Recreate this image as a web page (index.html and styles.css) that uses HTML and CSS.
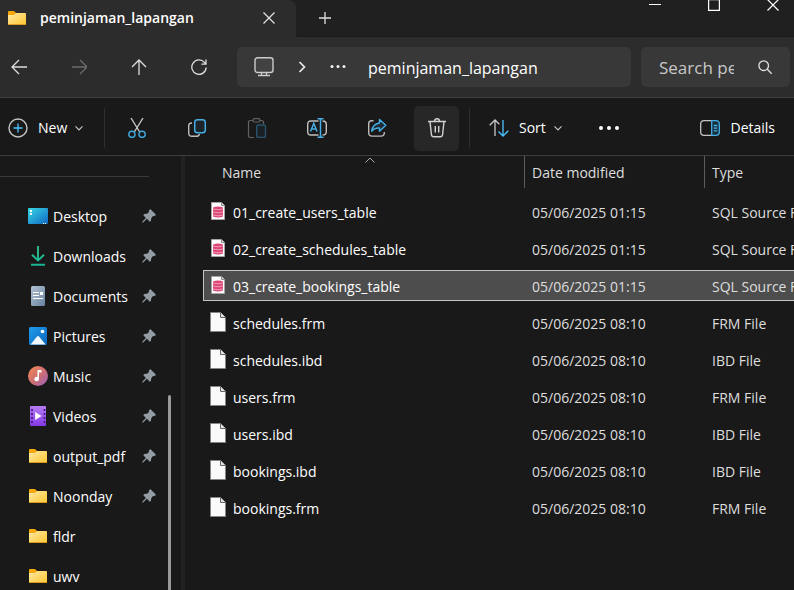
FILE: index.html
```html
<!DOCTYPE html>
<html lang="en">
<head>
<meta charset="utf-8">
<meta name="viewport" content="width=device-width, initial-scale=1">
<title>peminjaman_lapangan</title>
<link rel="stylesheet" href="styles.css">
</head>
<body>
<svg class="defs" aria-hidden="true">
  <defs>
    <linearGradient id="g-folder" x1="0" y1="0" x2="1" y2="1"><stop offset="0" stop-color="#ffe9a8"/><stop offset="1" stop-color="#ffc52e"/></linearGradient>
    <linearGradient id="g-desktop" x1="0" y1="0" x2="1" y2="1"><stop offset="0" stop-color="#37d8e4"/><stop offset="1" stop-color="#1268c4"/></linearGradient>
    <linearGradient id="g-down" gradientUnits="userSpaceOnUse" x1="0" y1="0" x2="0" y2="20"><stop offset="0" stop-color="#2fc28a"/><stop offset="1" stop-color="#16b595"/></linearGradient>
    <linearGradient id="g-doc" x1="0" y1="0" x2="1" y2="1"><stop offset="0" stop-color="#b4c3d6"/><stop offset="1" stop-color="#66829f"/></linearGradient>
    <linearGradient id="g-pic" x1="0" y1="0" x2="1" y2="1"><stop offset="0" stop-color="#219cec"/><stop offset="1" stop-color="#0b66bd"/></linearGradient>
    <linearGradient id="g-music" x1="0" y1="0" x2="1" y2="1"><stop offset="0" stop-color="#f38b50"/><stop offset=".55" stop-color="#cb6d75"/><stop offset="1" stop-color="#9a62bd"/></linearGradient>
    <linearGradient id="g-video" x1="0" y1="0" x2="0" y2="1"><stop offset="0" stop-color="#b57cf4"/><stop offset="1" stop-color="#8439e4"/></linearGradient>
    <symbol id="folder" viewBox="0 0 20 20">
      <path d="M1 4q0-1 1-1h5l2 2v3H1z" fill="#f7a70b"/>
      <path d="M1 7h6l2-2h9.200q.8 0 .8.800V17H1z" fill="url(#g-folder)"/>
      <path d="M1 16.500h18" stroke="#d99b20"/>
    </symbol>
    <symbol id="pin" viewBox="0 0 14 14">
      <path d="M8.500.200 13.800 5.500 13.200 6.800 10.800 7.300 9.200 9.300 9 11.800 7.800 12.700 4.900 9.800 1.200 13.400.300 13.500.300 12.700 3.900 8.900 1.300 6.300 2.200 5 5 4.800 6.700 3.200 7.200.900z" fill="#939da3"/>
    </symbol>
    <symbol id="page" viewBox="0 0 16 20">
      <path d="M.500.500h10l5 5v14H.500z" fill="#fafafa" stroke="#858585"/>
      <path d="M10.500.500v5h5" fill="#e4e4e4" stroke="#666"/>
    </symbol>
    <symbol id="sql" viewBox="0 0 16 20">
      <path d="M1.500 1.500h10l3 3v14h-13z" fill="#fcfcfc" stroke="#a5a5a5"/>
      <path d="M11.500 1.500v3h3" fill="#ddd" stroke="#888"/>
      <path d="M3 6.500q5-2 10 0v9q-5 2-10 0z" fill="#dc4675"/>
      <path d="M3 8q5 1.600 10 0M3 11q5 1.600 10 0M3 14q5 1.600 10 0" fill="none" stroke="#f4afc4" stroke-width=".8"/>
    </symbol>
    <symbol id="chev" viewBox="0 0 8 8"><path d="m.500 2.300 3.500 3.500 3.500-3.500" fill="none" stroke="#c8c8c8" stroke-width="1.200"/></symbol>
  </defs>
</svg>

<header class="titlebar">
  <div class="tab">
    <svg class="i20" aria-hidden="true"><use href="#folder"/></svg>
    <span class="tab-title">peminjaman_lapangan</span>
    <button class="plain" aria-label="Close tab"><svg class="i12" viewBox="0 0 12 12"><path d="m.500.500 11 11M11.500.500l-11 11" fill="none" stroke="#e4e4e4" stroke-width="1.200"/></svg></button>
  </div>
  <button class="plain new-tab" aria-label="New tab"><svg class="i12" viewBox="0 0 12 12"><path d="M0 6h12M6 0v12" fill="none" stroke="#dedede" stroke-width="1.300"/></svg></button>
  <div class="window-controls">
    <button class="plain" aria-label="Minimize"><svg class="i12" viewBox="0 0 12 12"><path d="M0 5.500h12" stroke="#fff"/></svg></button>
    <button class="plain" aria-label="Maximize"><svg class="i12" viewBox="0 0 12 12"><path d="M.600 .600h10.800v10.800H.600z" fill="none" stroke="#fff" stroke-width="1.200"/></svg></button>
    <button class="plain" aria-label="Close"><svg class="i12" viewBox="0 0 12 12"><path d="m.500.500 11 11M11.500.500l-11 11" stroke="#fff" stroke-width="1.200"/></svg></button>
  </div>
</header>

<nav class="navbar" aria-label="Navigation">
  <div class="nav-buttons">
    <button class="plain" aria-label="Back"><svg class="i16" viewBox="0 0 16 16"><path d="M16 8H1M8 1 1 8l7 7" fill="none" stroke="#ddd" stroke-width="1.300"/></svg></button>
    <button class="plain" aria-label="Forward" disabled><svg class="i16" viewBox="0 0 16 16"><path d="M1 8h15M9 1l7 7-7 7" fill="none" stroke="#6c6c6c" stroke-width="1.300"/></svg></button>
    <button class="plain" aria-label="Up"><svg class="i16" viewBox="0 0 16 16"><path d="M8 16V1M1 8l7-7 7 7" fill="none" stroke="#ddd" stroke-width="1.300"/></svg></button>
    <button class="plain" aria-label="Refresh"><svg class="i16" viewBox="0 0 16 16"><path d="M15.200 8.500A7.200 7.200 0 1 1 13.600 3.600L14.600 4.900M15 .500v4.700h-4.600" fill="none" stroke="#ddd" stroke-width="1.300"/></svg></button>
  </div>
  <div class="address">
    <button class="plain pc" aria-label="This PC"><svg class="i20" viewBox="0 0 20 20"><rect x="1" y=".700" width="18" height="14.800" rx="2.500" fill="#424242" stroke="#ccc" stroke-width="1.400"/><path d="M7.500 16v2.300M12.500 16v2.300M4 18.500h12" stroke="#ccc" stroke-width="1.300"/></svg></button>
    <button class="plain sep" aria-label="Expand"><svg class="i12" viewBox="0 0 12 12"><path d="m3.500 1 5 5-5 5" fill="none" stroke="#f0f0f0" stroke-width="1.600"/></svg></button>
    <button class="plain" aria-label="More folders"><svg class="i16" viewBox="0 0 16 16"><g fill="#f4f4f4"><circle cx="2" cy="7.500" r="1.500"/><circle cx="8" cy="7.500" r="1.500"/><circle cx="14" cy="7.500" r="1.500"/></g></svg></button>
    <a class="crumb" href="#files">peminjaman_lapangan</a>
  </div>
  <div class="search">
    <input type="text" aria-label="Search peminjaman_lapangan" placeholder="Search peminjaman_lapangan">
    <svg class="i16" viewBox="0 0 16 16" aria-hidden="true"><circle cx="6.700" cy="6.700" r="4.800" fill="none" stroke="#e2e2e2" stroke-width="1.300"/><path d="m10.300 10.300 4.400 4.400" stroke="#e2e2e2" stroke-width="1.300"/></svg>
  </div>
</nav>

<div class="toolbar" role="toolbar" aria-label="Commands">
  <button class="plain command new"><svg class="i20" viewBox="0 0 20 20"><circle cx="10" cy="10" r="9" fill="none" stroke="#c4c4c4" stroke-width="1.400"/><path d="M5.500 10h9M10 5.500v9" stroke="#4cc2ff" stroke-width="1.300"/></svg><span>New</span><svg class="i8"><use href="#chev"/></svg></button>
  <div class="tools">
    <button class="plain" aria-label="Cut"><svg class="i20" viewBox="0 0 20 20"><path d="M4 0l8.700 14M16 0 7.300 14" fill="none" stroke="#ccc" stroke-width="1.300"/><g fill="none" stroke="#3ea6dc" stroke-width="1.400"><circle cx="4.900" cy="16.300" r="3.100"/><circle cx="15.100" cy="16.300" r="3.100"/></g></svg></button>
    <button class="plain" aria-label="Copy"><svg class="i20" viewBox="0 0 20 20"><path d="M5 5H4.500Q1.700 5 1.700 7.800V15q0 3.300 3.300 3.300h4.700q2.200 0 2.800-2.300" fill="none" stroke="#bbb" stroke-width="1.400"/><rect x="7.700" y="1.700" width="10.600" height="13" rx="2.800" fill="#1d2429" stroke="#45aee4" stroke-width="1.500"/></svg></button>
    <button class="plain" aria-label="Paste" disabled><svg class="i20" viewBox="0 0 20 20"><path d="M6 2.500H3.500Q1.500 2.500 1.500 4.500v13q0 2 2 2H7M12.500 2.500h2q2 0 2 2V6" fill="none" stroke="#626262" stroke-width="1.200"/><rect x="6" y=".700" width="7" height="3.300" rx="1.500" fill="none" stroke="#626262" stroke-width="1.200"/><rect x="9.700" y="7" width="8.800" height="12.400" rx="1.500" fill="#1b2025" stroke="#28536b" stroke-width="1.400"/></svg></button>
    <button class="plain" aria-label="Rename"><svg class="i20" viewBox="0 0 20 20"><path d="M11.500 3H4Q.700 3 .700 6.300v7.400Q.700 17 4 17h7.500M15.500 3q3.800 0 3.800 3.300v7.400q0 3.300-3.800 3.300" fill="none" stroke="#c0c0c0" stroke-width="1.400"/><path d="m3.500 13.500 3.300-8 3.300 8M4.700 11h4.200M10.500.700h6M13.500.700v18.600M10.500 19.300h6" fill="none" stroke="#45aee4" stroke-width="1.500"/></svg></button>
    <button class="plain" aria-label="Share"><svg class="i20" viewBox="0 0 20 20"><path d="M6.500 2.800H4.700Q1.700 2.800 1.700 5.800v9q0 3.300 3.300 3.300h9q3.300 0 3.300-3.300V14" fill="none" stroke="#bbb" stroke-width="1.400"/><path d="m12.500 1.500 6.300 5.800-6.300 5.900V10Q7.500 9.600 4.700 13.300 5.300 6.200 12.500 5z" fill="#1d2a32" stroke="#45aee4" stroke-width="1.400" stroke-linejoin="round"/></svg></button>
    <button class="plain hot" aria-label="Delete"><svg class="i20" viewBox="0 0 20 20"><path d="M1 3.500h18M3 3.500l1.400 13q.2 2.300 2.500 2.300h6.200q2.300 0 2.500-2.300L17 3.500M7.500 3.500q0-2.700 2.500-2.700t2.500 2.700M8.300 8v6.500M11.700 8v6.500" fill="none" stroke="#d2d2d2" stroke-width="1.400"/></svg></button>
  </div>
  <button class="plain command sort"><svg class="i20" viewBox="0 0 20 20"><path d="M6 18V2M.700 7.300 6 2l4.300 4.300" fill="none" stroke="#c8c8c8" stroke-width="1.300"/><path d="M14 2v16M9.500 13.500 14 18l5.300-5.300" fill="none" stroke="#4cc2ff" stroke-width="1.300"/></svg><span>Sort</span><svg class="i8"><use href="#chev"/></svg></button>
  <button class="plain more" aria-label="See more"><svg class="i20" viewBox="0 0 20 20"><g fill="#fff"><circle cx="2" cy="10" r="2"/><circle cx="10" cy="10" r="2"/><circle cx="18" cy="10" r="2"/></g></svg></button>
  <button class="plain command details"><svg class="i20" viewBox="0 0 20 20"><path d="M12 2.700H4Q.700 2.700.700 6v8Q.700 17.300 4 17.300h8" fill="none" stroke="#c4c4c4" stroke-width="1.300"/><path d="M11.700 2.700H16q3.300 0 3.300 3.300v8q0 3.300-3.300 3.300h-4.300zM13.800 7.500h3.500M13.800 10.200h3.500M13.800 12.900h3.500" fill="#17303f" stroke="#45aee4" stroke-width="1.300"/></svg><span>Details</span></button>
</div>

<div class="body">
  <aside class="sidebar">
    <hr>
    <ul>
      <li><a href="#desktop"><svg class="i20" viewBox="0 0 20 20"><rect y="2" width="20" height="16" rx="1" fill="url(#g-desktop)"/><path d="M2 4h2v2H2zM2 7h2v2H2zM15 17h1v1h-1zM17 17h1v1h-1z" fill="#fff"/></svg><span>Desktop</span><svg class="i14"><use href="#pin"/></svg></a></li>
      <li><a href="#downloads"><svg class="i20" viewBox="0 0 20 20"><path d="M10 0v14M4 8.800l6 5.700 6-5.700M3 18.800h14" fill="none" stroke="url(#g-down)" stroke-width="1.900"/></svg><span>Downloads</span><svg class="i14"><use href="#pin"/></svg></a></li>
      <li><a href="#documents"><svg class="i20" viewBox="0 0 20 20"><rect x="3" width="14" height="20" rx="1.500" fill="url(#g-doc)"/><path d="M5 6.500h6M5 9.500h6M5 12.500h10" stroke="#fff" stroke-width="1.200"/><path d="M12 6h3v3h-3z" fill="#fff"/></svg><span>Documents</span><svg class="i14"><use href="#pin"/></svg></a></li>
      <li><a href="#pictures"><svg class="i20" viewBox="0 0 20 20"><rect x="1" y="1" width="18" height="18" rx="1.500" fill="url(#g-pic)"/><path d="m2.500 18.500 6.500-8q1-1 2 0l6.500 8z" fill="#f3f8ff"/><circle cx="14.500" cy="5.500" r="1.800" fill="#fff"/></svg><span>Pictures</span><svg class="i14"><use href="#pin"/></svg></a></li>
      <li><a href="#music"><svg class="i20" viewBox="0 0 20 20"><circle cx="10" cy="10" r="10" fill="url(#g-music)"/><path d="M9.500 4h4v2.500H11V13a2.300 2.300 0 1 1-1.500-2.100z" fill="#fff"/></svg><span>Music</span><svg class="i14"><use href="#pin"/></svg></a></li>
      <li><a href="#videos"><svg class="i20" viewBox="0 0 20 20"><rect x="2" width="16" height="20" rx="1" fill="url(#g-video)"/><path d="M4 3v15M16.500 3v15" stroke="#44187e" stroke-width="1.700" stroke-dasharray="2 2"/><path d="m7.200 6 6.300 4-6.300 4z" fill="#fff"/></svg><span>Videos</span><svg class="i14"><use href="#pin"/></svg></a></li>
      <li><a href="#output_pdf"><svg class="i20"><use href="#folder"/></svg><span>output_pdf</span><svg class="i14"><use href="#pin"/></svg></a></li>
      <li><a href="#noonday"><svg class="i20"><use href="#folder"/></svg><span>Noonday</span><svg class="i14"><use href="#pin"/></svg></a></li>
      <li><a href="#fldr"><svg class="i20"><use href="#folder"/></svg><span>fldr</span></a></li>
      <li><a href="#uwv"><svg class="i20"><use href="#folder"/></svg><span>uwv</span></a></li>
    </ul>
    <div class="thumb"></div>
  </aside>
  <main class="files" id="files">
    <table>
      <thead>
        <tr><th class="name">Name<svg class="caret" viewBox="0 0 10 6" aria-hidden="true"><path d="M.500 5.500 5 1l4.500 4.500" fill="none" stroke="#aaa"/></svg></th><th>Date modified</th><th>Type</th></tr>
      </thead>
      <tbody>
        <tr><td><svg class="file"><use href="#sql"/></svg>01_create_users_table</td><td>05/06/2025 01:15</td><td>SQL Source File</td></tr>
        <tr><td><svg class="file"><use href="#sql"/></svg>02_create_schedules_table</td><td>05/06/2025 01:15</td><td>SQL Source File</td></tr>
        <tr class="selected"><td><svg class="file"><use href="#sql"/></svg>03_create_bookings_table</td><td>05/06/2025 01:15</td><td>SQL Source File</td></tr>
        <tr><td><svg class="file"><use href="#page"/></svg>schedules.frm</td><td>05/06/2025 08:10</td><td>FRM File</td></tr>
        <tr><td><svg class="file"><use href="#page"/></svg>schedules.ibd</td><td>05/06/2025 08:10</td><td>IBD File</td></tr>
        <tr><td><svg class="file"><use href="#page"/></svg>users.frm</td><td>05/06/2025 08:10</td><td>FRM File</td></tr>
        <tr><td><svg class="file"><use href="#page"/></svg>users.ibd</td><td>05/06/2025 08:10</td><td>IBD File</td></tr>
        <tr><td><svg class="file"><use href="#page"/></svg>bookings.ibd</td><td>05/06/2025 08:10</td><td>IBD File</td></tr>
        <tr><td><svg class="file"><use href="#page"/></svg>bookings.frm</td><td>05/06/2025 08:10</td><td>FRM File</td></tr>
      </tbody>
    </table>
  </main>
</div>
</body>
</html>
```
FILE: styles.css
```css
* { box-sizing: border-box; }

body {
  margin: 0;
  height: 100vh;
  display: flex;
  flex-direction: column;
  overflow: hidden;
  background: #191919;
  color: #fff;
  font: 14px/20px "Segoe UI", "Open Sans", "Noto Sans", sans-serif;
}

svg { display: block; flex: none; }
.defs { position: absolute; width: 0; height: 0; }
.i8 { width: 8px; height: 8px; }
.i12 { width: 12px; height: 12px; }
.i14 { width: 14px; height: 14px; }
.i16 { width: 16px; height: 16px; }
.i20 { width: 20px; height: 20px; }

.plain {
  display: flex;
  align-items: center;
  justify-content: center;
  padding: 0;
  border: 0;
  background: none;
  color: inherit;
  font: inherit;
}

/* Title bar */
.titlebar {
  display: flex;
  flex: none;
  height: 37px;
  background: #202020;
}
.tab {
  display: flex;
  align-items: center;
  width: 296px;
  padding: 0 21px 2px 7px;
  background: #2c2c2c;
  border-radius: 0 8px 0 0;
}
.tab-title { flex: 1; margin-left: 13px; font-weight: 600; }
.new-tab { width: 58px; border-bottom: 1px solid #1b1b1b; border-radius: 0 0 0 4px; }
.window-controls {
  display: flex;
  flex: 1;
  justify-content: flex-end;
  align-items: flex-start;
  gap: 17px;
  border-bottom: 1px solid #1b1b1b;
}
.window-controls .plain { width: 42px; height: 10px; }

/* Navigation bar */
.navbar {
  display: flex;
  flex: none;
  height: 61px;
  padding: 10px 4px 10px 0;
  background: #2c2c2c;
  border-bottom: 1px solid #3f3f3f;
}
.nav-buttons { display: flex; gap: 22px; margin-right: 19px; }
.nav-buttons .plain { width: 38px; }
.address, .search {
  display: flex;
  align-items: center;
  background: #383838;
  border-radius: 5px;
}
.address { flex: 1; padding-left: 17px; margin-right: 10px; min-width: 0; }
.sep { margin: 0 22px; }
.crumb {
  margin-left: 22px;
  padding-top: 2px;
  color: #fff;
  font-size: 16px;
  line-height: 24px;
  text-decoration: none;
}
.search { width: 149px; padding-left: 18px; }
.search input {
  width: 75px;
  margin-right: 23px;
  padding: 2px 0 0;
  border: 0;
  outline: 0;
  background: none;
  color: #fff;
  font: inherit;
  font-size: 17px;
  line-height: 24px;
}
.search input::placeholder { color: #c8c8c8; opacity: 1; }

/* Command bar */
.toolbar {
  display: flex;
  flex: none;
  align-items: center;
  height: 58px;
  padding: 3px 19px 0 8px;
  border-bottom: 1px solid #3c3c3c;
}
.command span { margin: 0 8px 0 10px; }
.new { width: 96px; justify-content: flex-start; }
.tools {
  display: flex;
  align-items: center;
  gap: 15px;
  height: 40px;
  padding: 0 10px 0 9px;
  border: solid #2f2f2f;
  border-width: 0 1px;
}
.tools .plain { width: 45px; height: 45px; border-radius: 5px; }
.tools .hot { background: #272727; }
.sort { margin-left: 19px; }
.more { margin-left: 37px; }
.details { margin-left: auto; }
.details span { margin-right: 0; }

/* Content */
.body { display: flex; flex: 1; min-height: 0; }
.sidebar {
  position: relative;
  flex: none;
  width: 185px;
  border-right: 4px solid #222;
  overflow: hidden;
}
.sidebar hr { width: 149px; margin: 20px 0 0; border: 0; border-top: 1px solid #3a3a3a; }
.sidebar ul { margin: 19px 0 0; padding: 0; list-style: none; }
.sidebar a {
  display: flex;
  align-items: center;
  height: 40px;
  padding: 0 25px 0 28px;
  color: #fff;
  text-decoration: none;
}
.sidebar span { flex: 1; margin-left: 5px; padding-top: 2px; }
.thumb {
  position: absolute;
  top: 239px;
  right: 10px;
  bottom: 0;
  width: 3px;
  border-radius: 2px 2px 0 0;
  background: #9a9a9a;
}

.files { flex: 1; min-width: 0; padding-left: 18px; overflow: hidden; }
table, thead { display: block; }
tbody { display: flex; flex-direction: column; gap: 6px; padding-top: 8px; }
tr { display: grid; grid-template-columns: 321px 180px 1fr; height: 31px; white-space: nowrap; }
thead tr { height: 32px; }
th, td { display: flex; align-items: center; padding: 2px 0 0 8px; color: #dedede; font-weight: 400; }
th { padding-left: 7px; border-left: 1px solid #5c5c5c; }
.name { position: relative; margin-left: 11px; border-left-color: transparent; }
.caret { position: absolute; top: 1px; left: 50%; width: 10px; height: 6px; margin-left: -5px; }
td:first-child { padding-left: 7px; color: #fff; }
.file { width: 16px; height: 20px; margin: 0 7px 4px 0; }
.selected {
  background: #4d4d4d;
  box-shadow: inset 1px 0 #c4c4c4, inset 0 1px #c4c4c4, inset 0 -1px #c4c4c4;
}
```
